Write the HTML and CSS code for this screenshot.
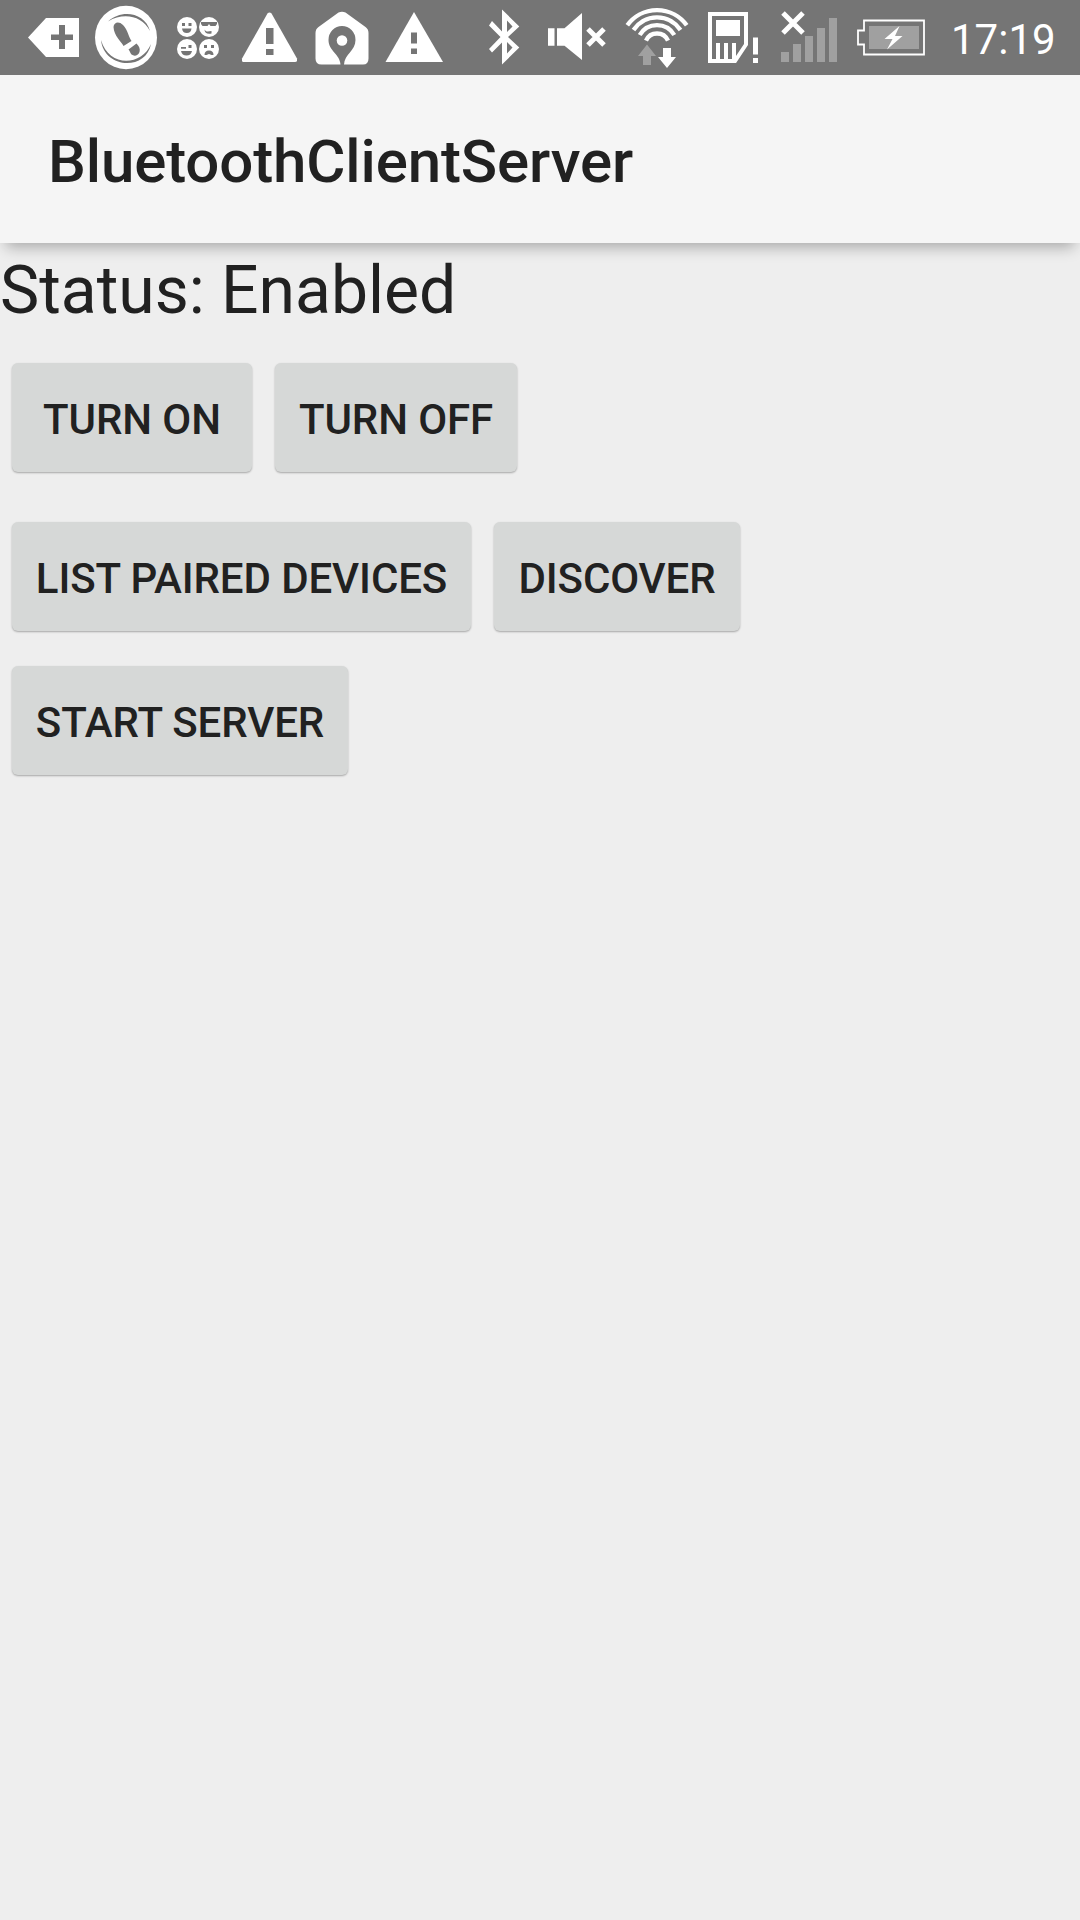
FILE: index.html
```html
<!DOCTYPE html>
<html lang="en">
<head>
<meta charset="utf-8">
<title>BluetoothClientServer</title>
<link rel="stylesheet" href="styles.css">
</head>
<body>
<div class="status-bar">
  <svg class="icon" width="90" height="75" viewBox="0 0 90 75"><path class="w" fill-rule="evenodd" d="M28 37.5 46 18H79V57H46ZM59 25V34.5H51V40H59V49H65V40H73V34.5H65V25Z"/></svg>
  <svg class="icon" width="78" height="75" viewBox="90 0 78 75"><ellipse class="w" cx="126" cy="37.5" rx="31" ry="31.7"/><path class="g" d="M108 21.5C121 9 145 12 150 31C142 16 124 12 108 21.5ZM101 40C104 69 146 71 151 44C142 66 109 68 101 40ZM113.500 27C114 22 119 21 123 25C128 30 128 36 131.500 41L123.500 46C121 41 114 36 113.500 27ZM128.500 49.500 136.500 43.500C139 46 140.500 49 139.500 52C138 56 134 56.500 131.500 54.500C130 53 130 51 128.500 49.500Z"/></svg>
  <svg class="icon" width="62" height="75" viewBox="168 0 62 75"><g class="w"><circle cx="187" cy="27" r="10"/><circle cx="209" cy="27" r="10"/><circle cx="187" cy="49" r="10"/><circle cx="209" cy="49" r="10"/></g><path class="g" d="M182 23h3v3h-3zM188.500 23h3v3h-3zM182 28.500h9.500q-.5 4.500-4.700 4.500t-4.800-4.500zM201 22h16v2l-1.500 2h-5l-1.500-2-1.500 2h-5l-1.500-2zM204.500 29.500c2 3 4 2 7 1.500v2.500c-4 1-7-.5-7-4zM181 47h5v1.800h-5zM188.500 45h3v3h-3zM181 51h11q-1 4.500-5.500 4.500t-5.500-4.500zM204 45h3v3h-3zM211 45h3v3h-3zM204.500 55q0-4.500 4.500-4.500t4.500 4.500h-2l-2.500-1-2.500 1z"/></svg>
  <svg class="icon" width="78" height="75" viewBox="230 0 78 75"><path class="w" d="M267.500 13.500Q269.500 11.500 271.500 13.500L297 58.500V61Q296.500 62 295 62H243.500Q242 62 242 60.500V58.500Z"/><path class="g" d="M266 28h7.500v16H266zM266 49h7.500v6H266z"/></svg>
  <svg class="icon" width="70" height="75" viewBox="308 0 70 75"><path class="w" d="M338.500 12.500Q342 11 345.500 12.500L365.500 27Q368.500 29 368.500 33V58.500Q368.500 64.500 363 64.500H344C344.500 54 355.500 51 355.500 40A13.500 14 0 0 0 328.500 40C328.500 51 340 54 340.500 64.500H321.500Q315.500 64.500 315.500 58.500V33Q315.500 29 318.500 27Z"/><circle class="w" cx="342" cy="40.500" r="5.300"/></svg>
  <svg class="icon" width="92" height="75" viewBox="378 0 92 75"><path class="w" d="M414 12 443 62H385.500Z"/><path class="g" d="M411 32.500h6v11h-6zM411 48.500h6v5.500h-6z"/></svg>
  <svg class="icon" width="66" height="75" viewBox="470 0 66 75"><path class="w" fill-rule="evenodd" d="M502 9.500 519.300 26.500 508 37 519.300 47.500 502 64.500V42.500L492 52.500 489 49 500.500 37 489 25.500 492 21 502 31.500ZM507 20.500V32L512.500 26.500ZM507 42V53.500L512.500 47.500Z"/></svg>
  <svg class="icon" width="80" height="75" viewBox="536 0 80 75"><path class="w" d="M548 28.300h6.500v17.500H548zM557 28.300h7.500L582 13v47L564.500 45.800H557z"/><path class="s" stroke-width="5" d="M588 29 604 45M604 29 588 45"/></svg>
  <svg class="icon" width="84" height="75" viewBox="616 0 84 75"><path class="s" stroke-width="4.300" d="M627.300 25.300A36.700 36.700 0 0 1 686.700 25.300M633.500 30A28.200 28.200 0 0 1 680.500 30M639.700 35A20 20 0 0 1 674.300 35M646 40.700A12 12 0 0 1 668 40.700"/><path class="dim" d="M647 44.500 656 56H651V65H643V56H638Z"/><path class="w" d="M663 48H671V57H676L667 68 658 57H663Z"/></svg>
  <svg class="icon" width="68" height="75" viewBox="700 0 68 75"><path class="s" stroke-width="4" d="M710 14H746V44.500L735 61H710Z"/><path class="w" d="M716 20h24v16h-24zM716 43h4v18h-4zM724 43h4v18h-4zM732 43h4v18h-4zM753 37.500h5v17h-5zM753 58h5v5h-5z"/></svg>
  <svg class="icon" width="78" height="75" viewBox="768 0 78 75"><path class="dim" d="M781 52h8v10h-8zM793 44h8v18h-8zM805 36h8v26h-8zM817 28h8v34h-8zM829 18h8v44h-8z"/><path class="s" stroke-width="5" d="M783 13 803 33M803 13 783 33"/></svg>
  <svg class="icon" width="105" height="75" viewBox="846 0 105 75"><path class="s" stroke-width="1.800" d="M864 20.500H924V54.500H864V44.500H858V30.500H864Z"/><path class="dim" d="M869 26h50v23h-50z"/><path class="w" d="M899.500 26 884.500 39H892.500L887 49.500 902.500 36H895Z"/></svg>
  <span class="clock">17:19</span>
</div>
<header class="app-bar"><h1 class="title">BluetoothClientServer</h1></header>
<main class="content">
  <p class="status">Status: Enabled</p>
  <div class="row first"><button class="btn on">TURN ON</button><button class="btn off">TURN OFF</button></div>
  <div class="row second"><button class="btn list">LIST PAIRED DEVICES</button><button class="btn discover">DISCOVER</button></div>
  <div class="row"><button class="btn server">START SERVER</button></div>
</main>
</body>
</html>
```
FILE: styles.css
```css
* { box-sizing: border-box; }
body { margin: 0; min-height: 1920px; background: #eee; color: #212121; font-family: Roboto, sans-serif; }
.status-bar { display: flex; height: 75px; background: #757575; }
.icon { display: block; flex: none; }
.w { fill: #fff; }
.g { fill: #757575; }
.dim { fill: #a0a0a0; }
.s { fill: none; stroke: #fff; }
.clock { color: #fff; font-size: 42px; line-height: 80px; white-space: nowrap; }
.app-bar { display: flex; align-items: center; height: 168px; padding: 6px 48px 0; background: #f5f5f5; box-shadow: 0 10px 14px -6px rgba(0, 0, 0, .3); }
.title { margin: 0; font-size: 60px; line-height: 70px; font-weight: 500; letter-spacing: -.12px; }
.status { margin: 0; padding-top: 8px; height: 120px; font-size: 66px; line-height: 80px; }
.row { display: flex; gap: 23px; padding-left: 12px; margin-bottom: 35px; }
.first { margin-bottom: 50px; }
.btn { height: 109px; padding: 3px 0 0; border: 0; border-radius: 6px; background: #d6d8d7; color: #212121; font: 500 42px/49px Roboto, sans-serif; letter-spacing: -.1px; white-space: nowrap; box-shadow: 0 1px 2px rgba(0, 0, 0, .3); }
.on { width: 240px; }
.off { width: 242px; }
.list { width: 459px; }
.discover { width: 246px; }
.server { width: 336px; }
```
